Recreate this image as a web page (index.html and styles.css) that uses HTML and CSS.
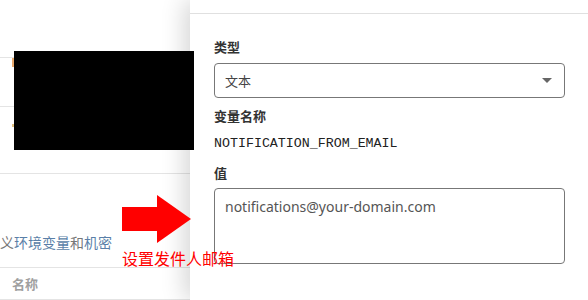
FILE: index.html
```html
<!DOCTYPE html>
<html lang="zh-CN">
<head>
    <meta charset="UTF-8">
    <meta name="viewport" content="width=device-width, initial-scale=1.0">
    <title>环境变量</title>
    <link rel="stylesheet" href="styles.css">
</head>
<body>
    <div class="screen">
        <div class="page">
            <div class="row row-top"></div>
            <div class="row row-item"><span class="accent"></span></div>
            <div class="row row-item-2"><span class="dot"></span></div>
            <div class="row row-intro">
                <p class="intro">义<span class="link">环境变量</span>和<span class="link">机密</span></p>
            </div>
            <div class="row row-head">名称</div>
        </div>

        <aside class="drawer">
            <div class="drawer-head"></div>
            <div class="drawer-body">
                <label class="field-label">类型</label>
                <div class="select">
                    <span>文本</span>
                    <span class="caret"></span>
                </div>

                <label class="field-label">变量名称</label>
                <div class="var-name">NOTIFICATION_FROM_EMAIL</div>

                <label class="field-label">值</label>
                <div class="textarea">notifications@your-domain.com</div>
            </div>
        </aside>

        <!-- annotations over the screenshot -->
        <div class="redact"></div>
        <div class="arrow">
            <span class="arrow-body"></span>
            <span class="arrow-head"></span>
        </div>
        <div class="note">设置发件人邮箱</div>
    </div>
</body>
</html>
```

FILE: styles.css
```css
body {
    margin: 0;
    font-family: "Noto Sans CJK SC", "Noto Sans", sans-serif;
    color: #333;
    background: #fff;
}
.screen {
    position: relative;
    display: grid;
    grid-template-columns: 190px 398px;
    width: 588px;
    height: 300px;
    overflow: hidden;
}

/* background page */
.page {
    display: flex;
    flex-direction: column;
}
.row {
    border-bottom: 1px solid #e4e4e4;
    box-sizing: border-box;
    flex-shrink: 0;
}
.row-top {
    height: 58px;
}
.row-item {
    height: 49px;
    padding-left: 12px;
}
.accent {
    display: block;
    width: 2px;
    height: 9px;
    background: #e8a86c;
}
.row-item-2 {
    height: 67px;
    padding: 17px 0 0 12px;
}
.dot {
    display: block;
    width: 2px;
    height: 3px;
    background: #e0c080;
}
.row-intro {
    height: 94px;
    padding-top: 58px;
}
.intro {
    margin: 0;
    font-size: 14px;
    line-height: 20px;
    color: #777;
    white-space: nowrap;
}
.intro .link {
    color: #5a7fa8;
}
.row-head {
    height: 32px;
    padding-left: 12px;
    font-size: 13px;
    font-weight: bold;
    line-height: 31px;
    color: #a0a0a0;
}

/* drawer */
.drawer {
    background: #fff;
    box-shadow: -6px 0 22px rgba(0, 0, 0, 0.16);
    z-index: 1;
}
.drawer-head {
    height: 13px;
    border-bottom: 1px solid #e0e0e0;
}
.drawer-body {
    display: flex;
    flex-direction: column;
    padding: 23px 23px 0 24px;
}
.field-label {
    font-size: 13px;
    font-weight: bold;
    line-height: 20px;
    color: #333;
}
.select {
    display: flex;
    align-items: center;
    justify-content: space-between;
    height: 35px;
    margin: 6px 0 8px;
    padding: 0 12px 0 10px;
    border: 1px solid #777;
    border-radius: 4px;
    box-sizing: border-box;
    font-size: 13px;
    color: #444;
}
.caret {
    width: 0;
    height: 0;
    border-left: 5px solid transparent;
    border-right: 5px solid transparent;
    border-top: 5px solid #666;
}
.var-name {
    margin: 8px 0 9px;
    font-family: "Liberation Mono", monospace;
    font-size: 13.3px;
    line-height: 20px;
    color: #222;
}
.textarea {
    height: 76px;
    margin-top: 5px;
    padding: 8px 10px;
    border: 1px solid #777;
    border-radius: 4px;
    box-sizing: border-box;
    font-family: "Noto Sans", sans-serif;
    font-size: 14px;
    line-height: 20px;
    color: #555;
}

/* annotations */
.redact {
    position: absolute;
    left: 14px;
    top: 51px;
    width: 180px;
    height: 99px;
    background: #000;
    z-index: 2;
}
.arrow {
    position: absolute;
    left: 122px;
    top: 195px;
    display: flex;
    align-items: center;
    z-index: 2;
}
.arrow-body {
    width: 35px;
    height: 24px;
    background: #ff0000;
}
.arrow-head {
    width: 0;
    height: 0;
    border-top: 24px solid transparent;
    border-bottom: 24px solid transparent;
    border-left: 34px solid #ff0000;
}
.note {
    position: absolute;
    left: 122px;
    top: 248px;
    font-size: 16px;
    line-height: 20px;
    color: #ff0000;
    z-index: 2;
}
```
